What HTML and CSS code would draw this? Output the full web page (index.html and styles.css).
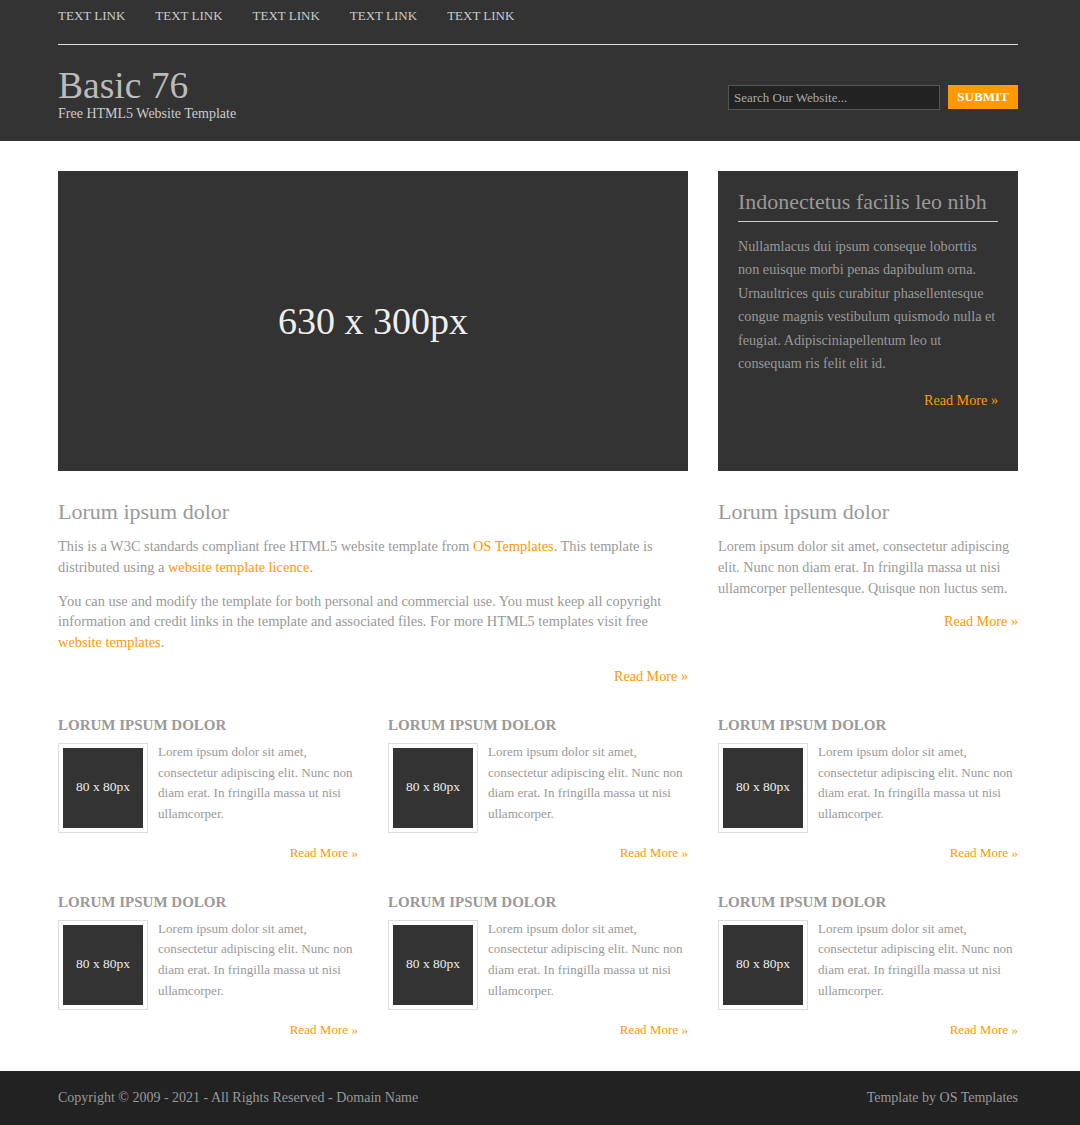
FILE: index.html
```html
<!DOCTYPE html>
<html lang="en">
<head>
<meta charset="utf-8">
<title>Basic 76</title>
<link rel="stylesheet" href="styles.css">
</head>
<body>
<header class="hd">
  <div class="wrap">
    <nav class="nav">
      <a href="#">TEXT LINK</a>
      <a href="#">TEXT LINK</a>
      <a href="#">TEXT LINK</a>
      <a href="#">TEXT LINK</a>
      <a href="#">TEXT LINK</a>
    </nav>
    <div class="brand">
      <div class="logo">
        <h1>Basic 76</h1>
        <p>Free HTML5 Website Template</p>
      </div>
      <form class="search">
        <input type="text" placeholder="Search Our Website...">
        <button type="button">SUBMIT</button>
      </form>
    </div>
  </div>
</header>

<main class="content">
  <div class="wrap">
    <section class="row-top">
      <div class="feature">630 x 300px</div>
      <aside class="box">
        <h2>Indonectetus facilis leo nibh</h2>
        <p>Nullamlacus dui ipsum conseque loborttis non euisque morbi penas dapibulum orna. Urnaultrices quis curabitur phasellentesque congue magnis vestibulum quismodo nulla et feugiat. Adipisciniapellentum leo ut consequam ris felit elit id.</p>
        <p class="more"><a href="#">Read More &raquo;</a></p>
      </aside>
    </section>

    <section class="row-mid">
      <article class="main">
        <h2>Lorum ipsum dolor</h2>
        <p>This is a W3C standards compliant free HTML5 website template from <a href="#">OS Templates</a>. This template is distributed using a <a href="#">website template licence</a>.</p>
        <p>You can use and modify the template for both personal and commercial use. You must keep all copyright information and credit links in the template and associated files. For more HTML5 templates visit free <a href="#">website templates</a>.</p>
        <p class="more"><a href="#">Read More &raquo;</a></p>
      </article>
      <article class="side">
        <h2>Lorum ipsum dolor</h2>
        <p>Lorem ipsum dolor sit amet, consectetur adipiscing elit. Nunc non diam erat. In fringilla massa ut nisi ullamcorper pellentesque. Quisque non luctus sem.</p>
        <p class="more"><a href="#">Read More &raquo;</a></p>
      </article>
    </section>

    <section class="grid">
      <article class="item">
        <h3>Lorum ipsum dolor</h3>
        <div class="item-body">
          <div class="thumb"><div class="ph">80 x 80px</div></div>
          <p>Lorem ipsum dolor sit amet, consectetur adipiscing elit. Nunc non diam erat. In fringilla massa ut nisi ullamcorper.</p>
        </div>
        <p class="more"><a href="#">Read More &raquo;</a></p>
      </article>
      <article class="item">
        <h3>Lorum ipsum dolor</h3>
        <div class="item-body">
          <div class="thumb"><div class="ph">80 x 80px</div></div>
          <p>Lorem ipsum dolor sit amet, consectetur adipiscing elit. Nunc non diam erat. In fringilla massa ut nisi ullamcorper.</p>
        </div>
        <p class="more"><a href="#">Read More &raquo;</a></p>
      </article>
      <article class="item">
        <h3>Lorum ipsum dolor</h3>
        <div class="item-body">
          <div class="thumb"><div class="ph">80 x 80px</div></div>
          <p>Lorem ipsum dolor sit amet, consectetur adipiscing elit. Nunc non diam erat. In fringilla massa ut nisi ullamcorper.</p>
        </div>
        <p class="more"><a href="#">Read More &raquo;</a></p>
      </article>
      <article class="item">
        <h3>Lorum ipsum dolor</h3>
        <div class="item-body">
          <div class="thumb"><div class="ph">80 x 80px</div></div>
          <p>Lorem ipsum dolor sit amet, consectetur adipiscing elit. Nunc non diam erat. In fringilla massa ut nisi ullamcorper.</p>
        </div>
        <p class="more"><a href="#">Read More &raquo;</a></p>
      </article>
      <article class="item">
        <h3>Lorum ipsum dolor</h3>
        <div class="item-body">
          <div class="thumb"><div class="ph">80 x 80px</div></div>
          <p>Lorem ipsum dolor sit amet, consectetur adipiscing elit. Nunc non diam erat. In fringilla massa ut nisi ullamcorper.</p>
        </div>
        <p class="more"><a href="#">Read More &raquo;</a></p>
      </article>
      <article class="item">
        <h3>Lorum ipsum dolor</h3>
        <div class="item-body">
          <div class="thumb"><div class="ph">80 x 80px</div></div>
          <p>Lorem ipsum dolor sit amet, consectetur adipiscing elit. Nunc non diam erat. In fringilla massa ut nisi ullamcorper.</p>
        </div>
        <p class="more"><a href="#">Read More &raquo;</a></p>
      </article>
    </section>
  </div>
</main>

<footer class="ft">
  <div class="wrap ft-inner">
    <p>Copyright &copy; 2009 - 2021 - All Rights Reserved - <a href="#">Domain Name</a></p>
    <p>Template by <a href="#">OS Templates</a></p>
  </div>
</footer>
</body>
</html>
```

FILE: styles.css
```css
html, body {
  margin: 0;
  padding: 0;
}

body {
  background: #fff;
  color: #999;
  font-family: "Liberation Serif", "Times New Roman", serif;
  font-size: 14.2px;
}

a {
  color: #f90;
  text-decoration: none;
}

.wrap {
  width: 960px;
  padding-right: 4px;
  margin: 0 auto;
}

/* Header */
.hd {
  background: #333;
}

.nav {
  display: flex;
  gap: 30px;
  padding: 8px 0 20px;
  line-height: 16px;
  font-size: 13px;
  border-bottom: 1px solid #ddd;
}

.nav a {
  color: #ccc;
}

.brand {
  display: flex;
  justify-content: space-between;
  align-items: flex-start;
  padding: 22px 0 19px;
}

.logo h1 {
  margin: 0;
  font-size: 37.5px;
  line-height: 37px;
  font-weight: normal;
  color: #bbb;
}

.logo p {
  margin: 2px 0 0;
  font-size: 14px;
  line-height: 16px;
  color: #ccc;
}

.search {
  display: flex;
  align-items: flex-start;
  gap: 8px;
  margin-top: 18px;
}

.search input {
  box-sizing: border-box;
  width: 212px;
  height: 25px;
  margin: 0;
  padding: 0 5px;
  background: #222;
  border: 1px solid #555;
  color: #aaa;
  font-family: inherit;
  font-size: 13px;
  outline: none;
}

.search input::placeholder {
  color: #aaa;
  opacity: 1;
}

.search button {
  box-sizing: border-box;
  width: 70px;
  height: 24px;
  margin: 0;
  padding: 0;
  background: #f90;
  border: none;
  color: #fff;
  font-family: inherit;
  font-size: 13px;
  font-weight: bold;
  cursor: pointer;
}

/* Content */
.content {
  padding: 30px 0 31px;
}

.row-top {
  display: flex;
  gap: 30px;
  margin-bottom: 30px;
}

.feature {
  width: 630px;
  height: 300px;
  flex: none;
  display: flex;
  align-items: center;
  justify-content: center;
  background: #333;
  color: #eee;
  font-size: 38px;
}

.box {
  box-sizing: border-box;
  width: 300px;
  height: 300px;
  flex: none;
  padding: 21px 20px 20px;
  background: #333;
}

.box h2 {
  margin: 0;
  padding-bottom: 9px;
  border-bottom: 1px solid #ccc;
  font-size: 22px;
  line-height: 20px;
  font-weight: normal;
  color: #999;
}

.box p {
  margin: 13px 0 0;
  line-height: 23.4px;
}

.box p.more {
  margin-top: 14px;
}

.more {
  text-align: right;
}

.row-mid {
  display: flex;
  gap: 30px;
  margin-bottom: 29px;
}

.main {
  width: 630px;
  flex: none;
}

.main p {
  font-size: 14.4px;
}

.side {
  width: 300px;
  flex: none;
}

.row-mid h2 {
  margin: 0 0 13px;
  font-size: 22px;
  line-height: 22px;
  font-weight: normal;
  color: #999;
}

.row-mid p {
  margin: 0 0 13px;
  line-height: 20.8px;
}

.row-mid p.more {
  margin-bottom: 0;
  font-size: 14.2px;
}

.grid {
  display: grid;
  grid-template-columns: repeat(3, 300px);
  gap: 29px 30px;
}

.item h3 {
  margin: 0 0 9px;
  font-size: 15px;
  line-height: 18px;
  font-weight: bold;
  text-transform: uppercase;
  color: #999;
}

.item-body {
  display: flex;
  gap: 10px;
  align-items: flex-start;
}

.thumb {
  flex: none;
  padding: 4px;
  border: 1px solid #ddd;
}

.ph {
  box-sizing: border-box;
  width: 80px;
  height: 80px;
  padding-bottom: 2px;
  display: flex;
  align-items: center;
  justify-content: center;
  background: #333;
  color: #eee;
  font-size: 13.5px;
}

.item-body p {
  margin: -1px 0 0;
  font-size: 13.1px;
  line-height: 20.8px;
}

.item .more {
  margin: 10px 0 0;
  font-size: 13.1px;
  line-height: 20.8px;
}

/* Footer */
.ft {
  background: #222;
}

.ft-inner {
  display: flex;
  justify-content: space-between;
  padding: 18px 4px 20px 0;
}

.ft p {
  margin: 0;
  font-size: 14px;
  line-height: 17px;
  color: #999;
}

.ft a {
  color: #999;
}
```
